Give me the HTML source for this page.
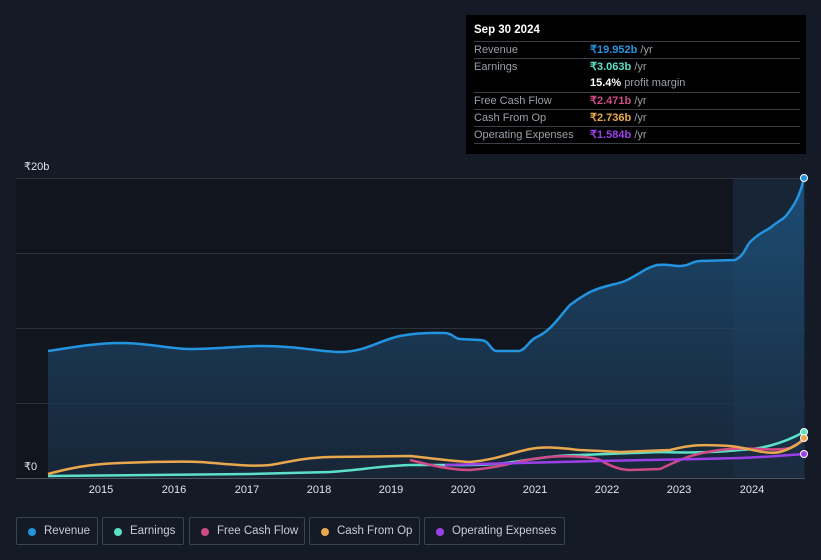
<!DOCTYPE html>
<html><head><meta charset="utf-8"><style>
body{margin:0;width:821px;height:560px;background:#151b26;font-family:"Liberation Sans",sans-serif;overflow:hidden;position:relative}
.tt{position:absolute;left:466px;top:15px;width:340px;height:139px;background:#000;color:#fff;font-size:11px}
.tt .h{position:absolute;left:8px;top:9px;font-size:11.5px;font-weight:bold}
.row{position:absolute;left:8px;width:326px;border-top:1px solid #3a3f47;height:17px;line-height:17px;color:#9aa0a6}
.row span{position:absolute;left:116px;font-weight:bold}
.row span i{font-style:normal;font-weight:normal;color:#9aa0a6}
.leg{position:absolute;top:517px;height:28px;border:1px solid #3b4250;border-radius:2px;color:#c8ccd2;font-size:11.5px;line-height:27px;box-sizing:border-box;padding-left:27px}
.leg b{position:absolute;left:11px;top:10px;width:8px;height:8px;border-radius:50%}
.yl{position:absolute;left:24px;color:#e0e3e7;font-size:11px}
.xl{position:absolute;top:484px;color:#e0e3e7;font-size:11px;width:40px;text-align:center}
</style></head><body>
<svg width="821" height="560" style="position:absolute;left:0;top:0">
<defs><linearGradient id="g" x1="0" y1="0" x2="0" y2="1"><stop offset="0" stop-color="#1d5480" stop-opacity=".85"/><stop offset="1" stop-color="#1b2d42" stop-opacity=".7"/></linearGradient></defs>
<rect x="16" y="178" width="717" height="300" fill="#11161e"/>
<rect x="733" y="178" width="72" height="300" fill="#172536"/>
<g stroke="#2c333d" stroke-width="1"><line x1="16" y1="178.5" x2="805" y2="178.5"/><line x1="16" y1="253.5" x2="805" y2="253.5"/><line x1="16" y1="328.5" x2="805" y2="328.5"/><line x1="16" y1="403.5" x2="805" y2="403.5"/><line x1="16" y1="478.5" x2="805" y2="478.5" stroke="#4a515c"/></g>
<path d="M48,351 C80,346 100,343 120,343 C150,343 170,349 190,349 C220,349 240,346 260,346 C300,346 320,352 340,352 C365,352 380,340 400,336 C420,332 440,333 445,333 C452,333 455,339 460,339 L480,340 C490,340 490,351 497,351 L518,351 C525,351 528,342 535,338 C545,333 545,332 550,328 C560,318 565,310 570,305 C580,297 585,295 590,292 C605,285 615,285 625,281 C640,274 645,268 657,265 C668,264 672,266 680,266 C690,266 692,261 700,261 L735,260 C745,255 745,248 750,242 C757,235 763,232 770,228 C777,222 780,221 785,217 C795,205 800,195 804,178 L804,478 L48,478 Z" fill="url(#g)"/>
<path d="M48,351 C80,346 100,343 120,343 C150,343 170,349 190,349 C220,349 240,346 260,346 C300,346 320,352 340,352 C365,352 380,340 400,336 C420,332 440,333 445,333 C452,333 455,339 460,339 L480,340 C490,340 490,351 497,351 L518,351 C525,351 528,342 535,338 C545,333 545,332 550,328 C560,318 565,310 570,305 C580,297 585,295 590,292 C605,285 615,285 625,281 C640,274 645,268 657,265 C668,264 672,266 680,266 C690,266 692,261 700,261 L735,260 C745,255 745,248 750,242 C757,235 763,232 770,228 C777,222 780,221 785,217 C795,205 800,195 804,178" fill="none" stroke="#2394e0" stroke-width="2.5"/>
<path d="M48,476 L150,475 L250,474 L330,472 C360,470 380,466 410,465 L440,465 C470,465 490,466 520,461 C540,458 560,455 580,455 L660,452 C690,453 720,452 740,450 C760,449 780,445 804,432" fill="none" stroke="#5ce0c8" stroke-width="2.5"/>
<path d="M410,460 C430,465 450,470 470,470 C500,468 520,460 540,458 C560,455 590,456 600,460 C610,466 620,470 630,470 L660,469 C680,460 690,454 720,450 C750,446 770,452 790,448 L804,440" fill="none" stroke="#d04a86" stroke-width="2.5"/>
<path d="M48,474 C70,468 90,464 120,463 C150,462 180,461 200,462 C230,464 250,467 270,465 C290,462 300,458 330,457 L410,456 C430,458 450,461 470,462 C495,460 510,453 530,449 C545,446 560,448 580,450 L620,452 L670,450 C690,445 700,444 730,446 C750,448 765,455 780,452 C790,449 800,444 804,438" fill="none" stroke="#e9a84e" stroke-width="2.5"/>
<path d="M445,465 L520,463 L600,461 L700,459 L740,458 C770,457 790,455 804,454" fill="none" stroke="#9b40e8" stroke-width="2.5"/>
<circle cx="804" cy="178" r="3.5" fill="#2394e0" stroke="#fff" stroke-width="1"/>
<circle cx="804" cy="432" r="3.5" fill="#5ce0c8" stroke="#fff" stroke-width="1"/>
<circle cx="804" cy="438" r="3.5" fill="#e9a84e" stroke="#fff" stroke-width="1"/>
<circle cx="804" cy="454" r="3.5" fill="#9b40e8" stroke="#fff" stroke-width="1"/>
</svg>
<div class="yl" style="top:160px">₹20b</div>
<div class="yl" style="top:460px">₹0</div>
<div class="xl" style="left:81px">2015</div><div class="xl" style="left:154px">2016</div><div class="xl" style="left:227px">2017</div><div class="xl" style="left:299px">2018</div><div class="xl" style="left:371px">2019</div><div class="xl" style="left:443px">2020</div><div class="xl" style="left:515px">2021</div><div class="xl" style="left:587px">2022</div><div class="xl" style="left:659px">2023</div><div class="xl" style="left:732px">2024</div>
<div class="tt"><div class="h">Sep 30 2024</div>
<div class="row" style="top:26px">Revenue<span style="color:#2394e0">₹19.952b <i>/yr</i></span></div>
<div class="row" style="top:43px">Earnings<span style="color:#5ce0c8">₹3.063b <i>/yr</i></span></div>
<div class="row" style="top:60px;border-top:none"><span style="color:#fff">15.4% <i>profit margin</i></span></div>
<div class="row" style="top:77px">Free Cash Flow<span style="color:#d04a86">₹2.471b <i>/yr</i></span></div>
<div class="row" style="top:94px">Cash From Op<span style="color:#e9a84e">₹2.736b <i>/yr</i></span></div>
<div class="row" style="top:111px">Operating Expenses<span style="color:#9b40e8">₹1.584b <i>/yr</i></span></div>
<div class="row" style="top:128px;height:0"></div>
</div>
<div class="leg" style="left:16px;width:82px"><b style="background:#2394e0"></b>Revenue</div>
<div class="leg" style="left:102px;width:82px"><b style="background:#5ce0c8"></b>Earnings</div>
<div class="leg" style="left:189px;width:116px"><b style="background:#d04a86"></b>Free Cash Flow</div>
<div class="leg" style="left:309px;width:111px"><b style="background:#e9a84e"></b>Cash From Op</div>
<div class="leg" style="left:424px;width:141px"><b style="background:#9b40e8"></b>Operating Expenses</div>
</body></html>
